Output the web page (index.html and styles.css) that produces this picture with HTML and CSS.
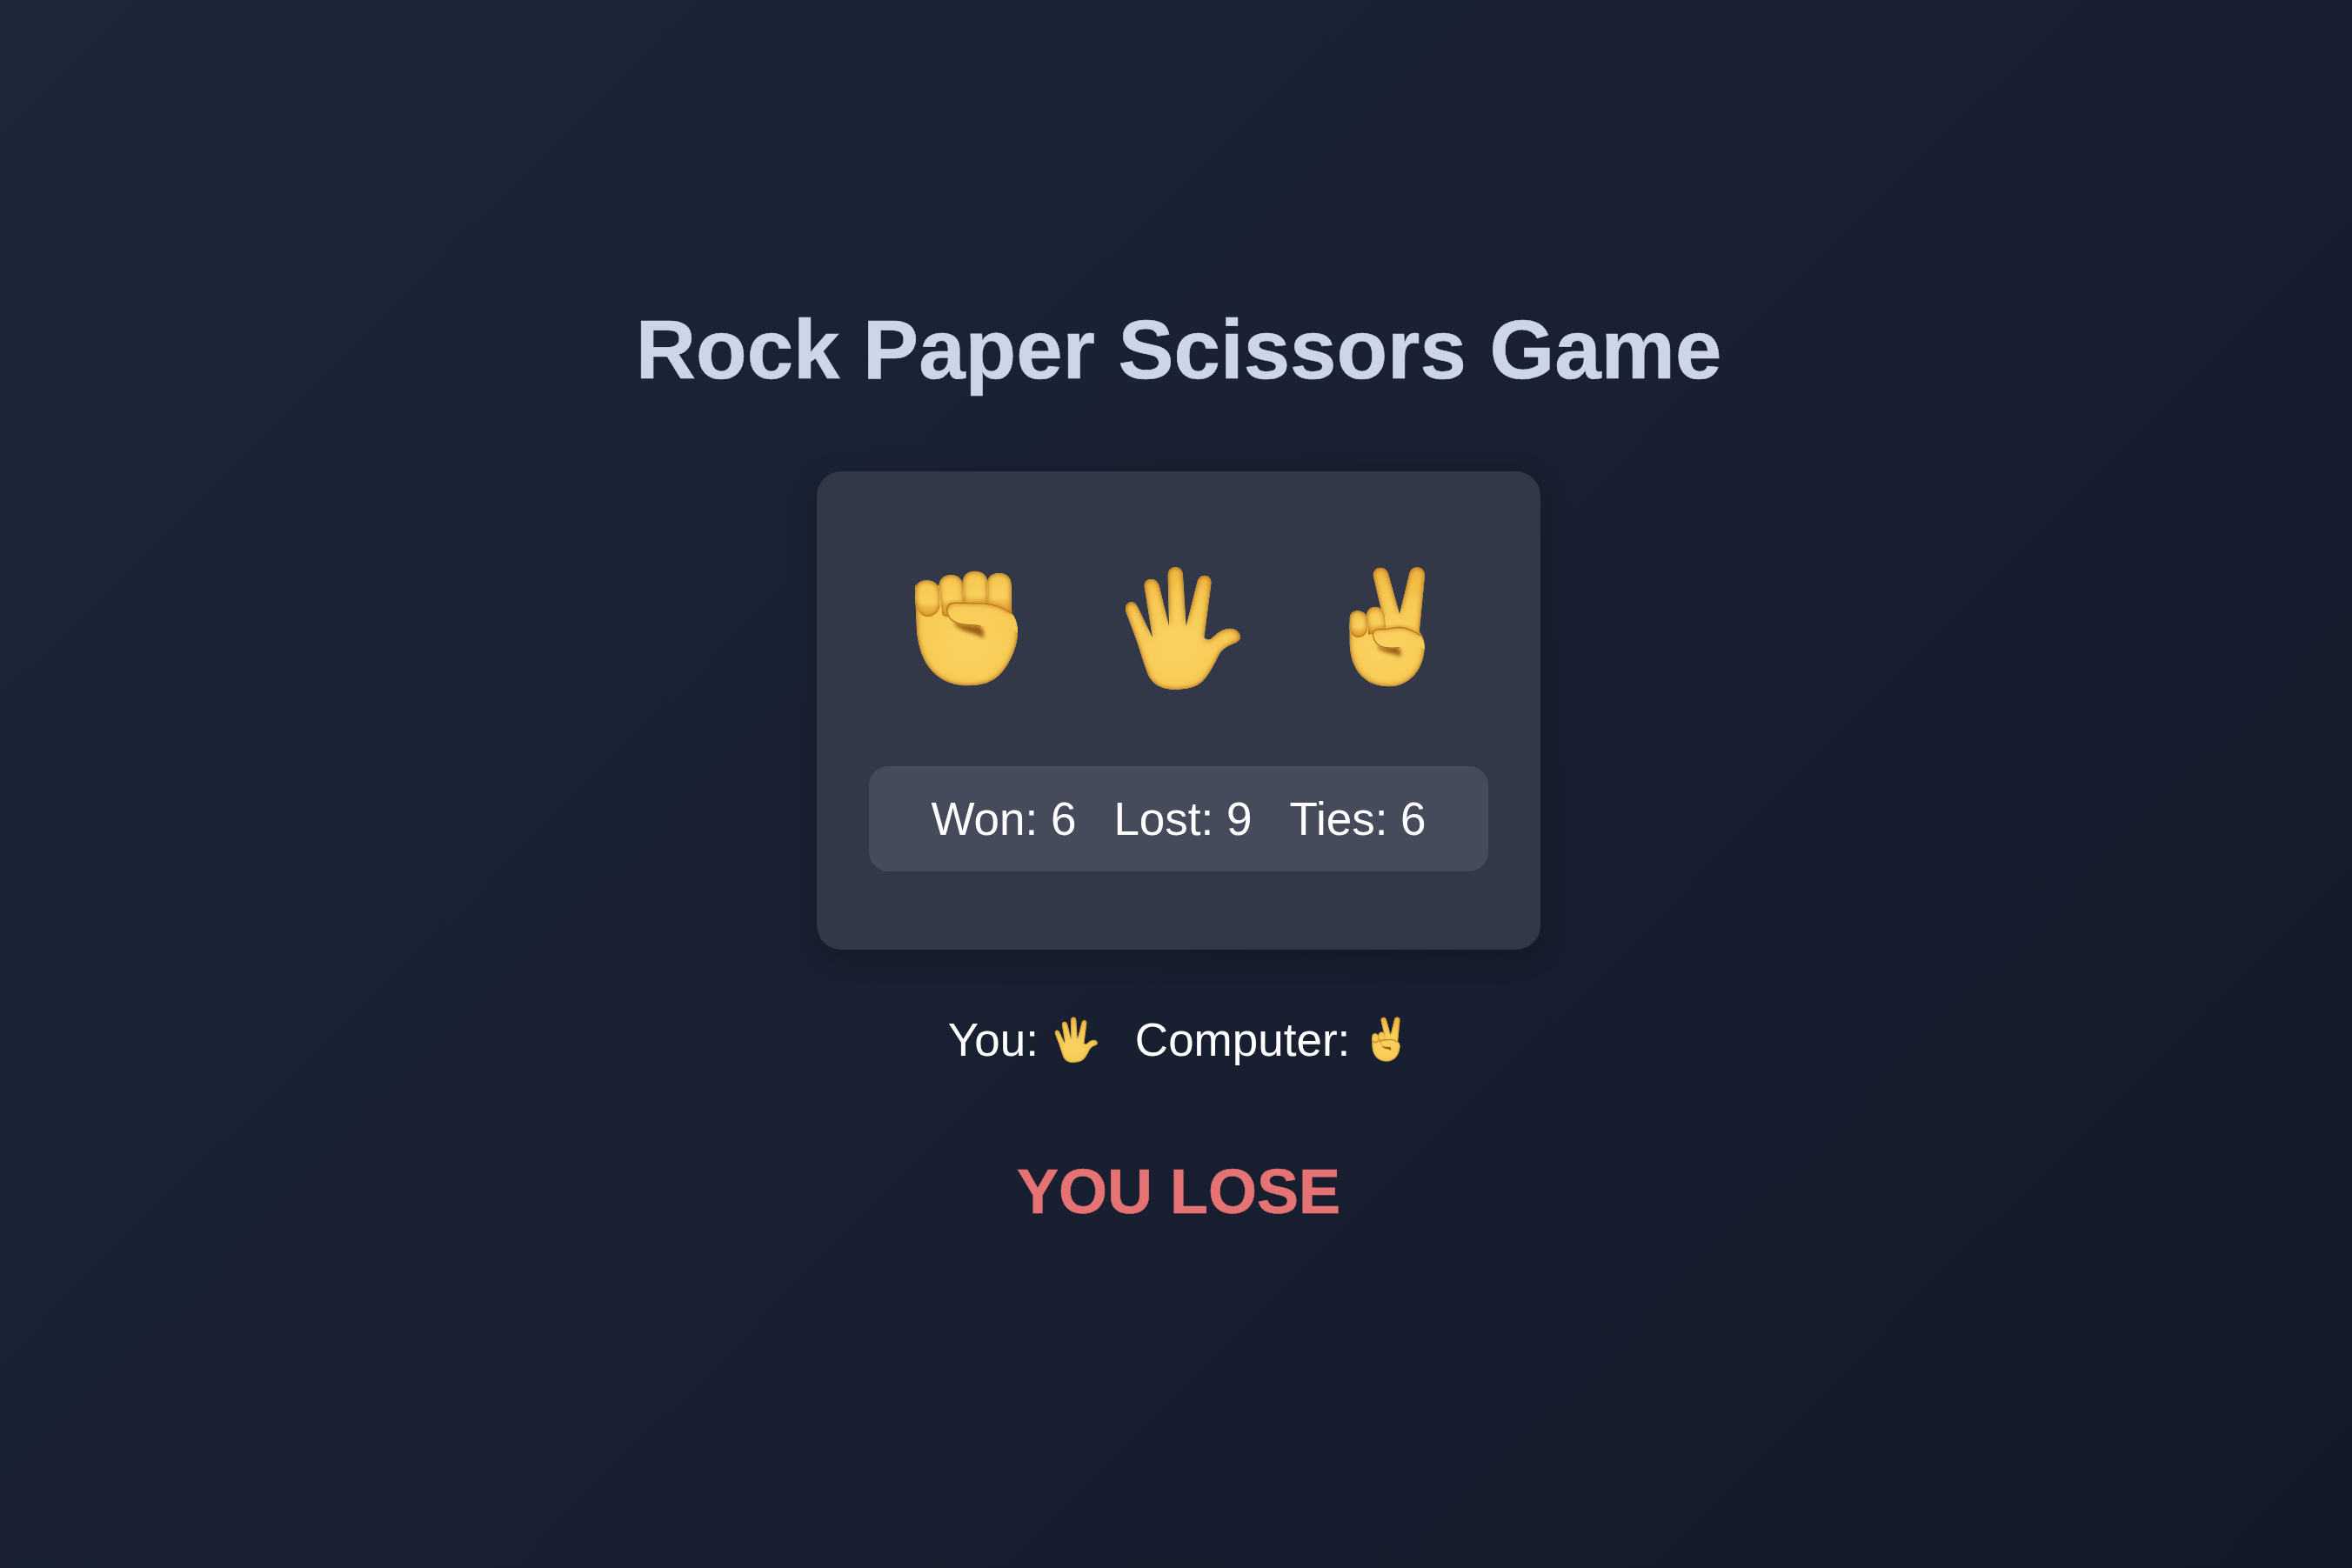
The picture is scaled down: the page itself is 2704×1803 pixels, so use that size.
FILE: index.html
```html
<!DOCTYPE html>
<html lang="en">

<head>
    <meta charset="UTF-8">
    <meta name="viewport" content="width=device-width, initial-scale=1.0">
    <title>Rock Paper Scissors Game</title>
    <link rel="stylesheet" href="styles.css">
</head>

<body>
    <main class="game">
        <h1 class="title">Rock Paper Scissors Game</h1>

        <section class="card">
            <div class="choices">
                <button class="choice" type="button" aria-label="Rock">
                    <svg class="hand" viewBox="-15 6 540 540">
                        <defs>
                            <radialGradient id="skin" gradientUnits="userSpaceOnUse" cx="250" cy="330" r="240">
                                <stop offset="0" stop-color="#fad262" />
                                <stop offset="0.7" stop-color="#f7ca54" />
                                <stop offset="1" stop-color="#f1ba44" />
                            </radialGradient>
                            <linearGradient id="finger" x1="0" y1="0" x2="0" y2="1">
                                <stop offset="0" stop-color="#f5c64e" />
                                <stop offset="0.6" stop-color="#f9cf5c" />
                                <stop offset="0.74" stop-color="#eeb944" />
                                <stop offset="1" stop-color="#e3a534" />
                            </linearGradient>
                            <filter id="soft" x="-30%" y="-30%" width="160%" height="160%">
                                <feGaussianBlur stdDeviation="6" />
                            </filter>
                            <filter id="fine" x="-10%" y="-10%" width="120%" height="120%">
                                <feGaussianBlur stdDeviation="1.2" />
                            </filter>
                            <filter id="edge" x="-5%" y="-5%" width="110%" height="110%">
                                <feGaussianBlur in="SourceAlpha" stdDeviation="10" result="blur" />
                                <feComposite in="SourceAlpha" in2="blur" operator="arithmetic" k2="1.6" k3="-1.6" result="rim" />
                                <feFlood flood-color="#bb7118" />
                                <feComposite in2="rim" operator="in" result="shade" />
                                <feMerge>
                                    <feMergeNode in="SourceGraphic" />
                                    <feMergeNode in="shade" />
                                </feMerge>
                            </filter>
                        </defs>
                        <g id="fist">
                            <path class="skin" d="M66 150L72 290C78 340 92 390 125 425C160 462 205 475 250 475C295 475 335 465 365 430C398 390 418 340 420 295C420 262 412 238 398 226L398 130L66 130Z" />
                            <path class="finger" d="M314 130C314 100 330 86 358 87C385 88 398 105 398 130L398 226L314 215Z" />
                            <path class="finger" d="M230 120C230 95 248 80 272 80C298 80 316 95 316 120L318 215L234 215Z" />
                            <path class="finger" d="M148 136C148 108 165 93 190 93C215 93 232 108 232 136L236 225C215 240 180 245 160 232Z" />
                            <path class="finger" d="M66 150C66 125 82 112 106 112C135 112 152 130 152 158L152 200C150 222 130 238 108 238C85 236 70 215 68 190Z" />
                            <path class="crease" d="M200 252C230 272 275 262 292 272C304 282 306 298 300 312C280 294 240 296 205 268Z" filter="url(#soft)" />
                            <path class="fill" d="M176 215C176 198 188 190 205 190L300 192C340 194 372 208 398 226C412 238 420 262 420 295C395 272 345 262 292 270C265 264 240 268 215 260C192 254 176 236 176 215Z" />
                            <path class="glow" d="M176 215C176 198 188 190 205 190L300 192C340 194 372 208 398 226" filter="url(#soft)" />
                            <path class="line" d="M176 215C176 198 188 190 205 190L300 192C340 194 372 208 398 226M176 215C178 238 194 254 215 260C240 268 268 264 292 270" filter="url(#fine)" />
                        </g>
                    </svg>
                </button>
                <button class="choice" type="button" aria-label="Paper">
                    <svg class="hand" viewBox="-15 6 540 540">
                        <g id="palm">
                            <path class="skin" d="M240 488C195 488 160 470 145 425C130 385 118 340 103 300L75 225C66 205 76 187 92 187C104 187 110 195 116 208L165 310L137 135C134 118 145 108 160 108C175 108 186 118 189 135L222 270L218 95C218 78 228 66 244 66C260 66 270 78 270 95L281 270L318 122C322 105 330 95 344 95C360 95 370 108 367 125L343 310C350 316 358 318 365 315C385 298 400 280 430 278C452 277 468 292 468 308C468 320 455 326 440 332C420 340 408 348 396 365C375 405 365 430 340 458C315 482 280 488 240 488Z" />
                        </g>
                    </svg>
                </button>
                <button class="choice" type="button" aria-label="Scissors">
                    <svg class="hand" viewBox="-15 6 540 540">
                        <g id="peace">
                            <path class="skin" d="M206 95C206 78 217 68 232 68C248 68 256 80 260 95L297 228L330 92C334 76 342 67 358 67C375 67 385 80 384 98L365 292C378 305 384 322 383 345C382 385 365 430 330 455C305 472 285 478 258 478C225 478 185 468 155 430C135 400 127 370 125 330L125 260L240 240Z" />
                            <path class="finger" d="M182 240C182 215 196 203 214 203C234 203 248 222 248 250L250 285L190 300Z" />
                            <path class="finger" d="M125 245C125 228 135 217 152 217C172 217 187 232 187 252L187 280C185 298 170 310 152 310C138 308 127 296 125 280Z" />
                            <path class="crease" d="M222 335C250 352 275 335 293 345C302 352 303 365 299 376C280 362 245 365 222 345Z" filter="url(#soft)" />
                            <path class="fill" d="M205 298C205 288 215 281 230 281C260 282 275 274 300 274C330 278 355 292 368 302C378 315 384 330 383 350C365 336 330 334 295 344C270 346 240 345 225 335C212 328 205 312 205 298Z" />
                            <path class="glow" d="M205 298C205 288 215 281 230 281C260 282 275 274 300 274C330 278 355 292 368 302" filter="url(#soft)" />
                            <path class="line" d="M205 298C205 288 215 281 230 281C260 282 275 274 300 274C330 278 355 292 368 302M205 298C207 316 214 328 225 335C240 345 270 346 295 344" filter="url(#fine)" />
                        </g>
                    </svg>
                </button>
            </div>
            <div class="stats">
                <span>Won: 6</span>
                <span>Lost: 9</span>
                <span>Ties: 6</span>
            </div>
        </section>

        <div class="picks">
            <span>You:<svg class="mini" viewBox="-15 6 540 540"><use href="#palm" /></svg></span>
            <span>Computer:<svg class="mini" viewBox="-15 6 540 540"><use href="#peace" /></svg></span>
        </div>

        <div class="result">YOU LOSE</div>
    </main>
</body>

</html>
```

FILE: styles.css
```css
html,
body {
    margin: 0;
    height: 100%;
}

body {
    font-family: "Liberation Sans", Arial, sans-serif;
    background: linear-gradient(135deg, #1d2739, #131929);
    color: white;
}

.game {
    display: flex;
    flex-direction: column;
    align-items: center;
    padding: 340px 0 0 6px;
}

.title {
    margin: 0;
    font-size: 96px;
    line-height: 124px;
    font-weight: bold;
    color: #cdd6e6;
    -webkit-text-stroke: 0.6px #cdd6e6;
}

.card {
    box-sizing: border-box;
    width: 832px;
    height: 550px;
    margin-top: 78px;
    padding: 60px;
    background-color: #323847;
    border-radius: 28px;
    box-shadow: 0 8px 32px rgba(0, 0, 0, 0.2);
}

.choices {
    display: flex;
    justify-content: center;
    gap: 60px;
    margin-bottom: 39px;
}

.choice {
    display: flex;
    align-items: center;
    height: 240px;
    padding: 0;
    border: none;
    background: none;
}

.hand {
    display: block;
    width: 180px;
    height: 180px;
}

.skin {
    fill: url(#skin);
    filter: url(#edge);
}

.finger {
    fill: url(#finger);
    filter: url(#edge);
}

.fill {
    fill: url(#skin);
}

.crease {
    fill: #9c5f17;
}

.glow {
    fill: none;
    stroke: #d4912a;
    stroke-width: 10;
}

.line {
    fill: none;
    stroke: #b0701d;
    stroke-width: 3.5;
    stroke-linecap: round;
}

.stats {
    display: flex;
    justify-content: center;
    align-items: center;
    gap: 43px;
    height: 121px;
    font-size: 53px;
    background-color: #454b5a;
    border-radius: 22px;
}

.picks {
    display: flex;
    justify-content: center;
    align-items: center;
    gap: 36px;
    height: 68px;
    margin-top: 69px;
    padding-left: 7px;
    font-size: 53px;
}

.picks span {
    display: flex;
    align-items: center;
    gap: 8px;
}

.mini {
    display: block;
    width: 67px;
    height: 67px;
}

.result {
    margin-top: 100px;
    font-size: 72px;
    font-weight: bold;
    color: #e57373;
    -webkit-text-stroke: 0.6px #e57373;
}
```
